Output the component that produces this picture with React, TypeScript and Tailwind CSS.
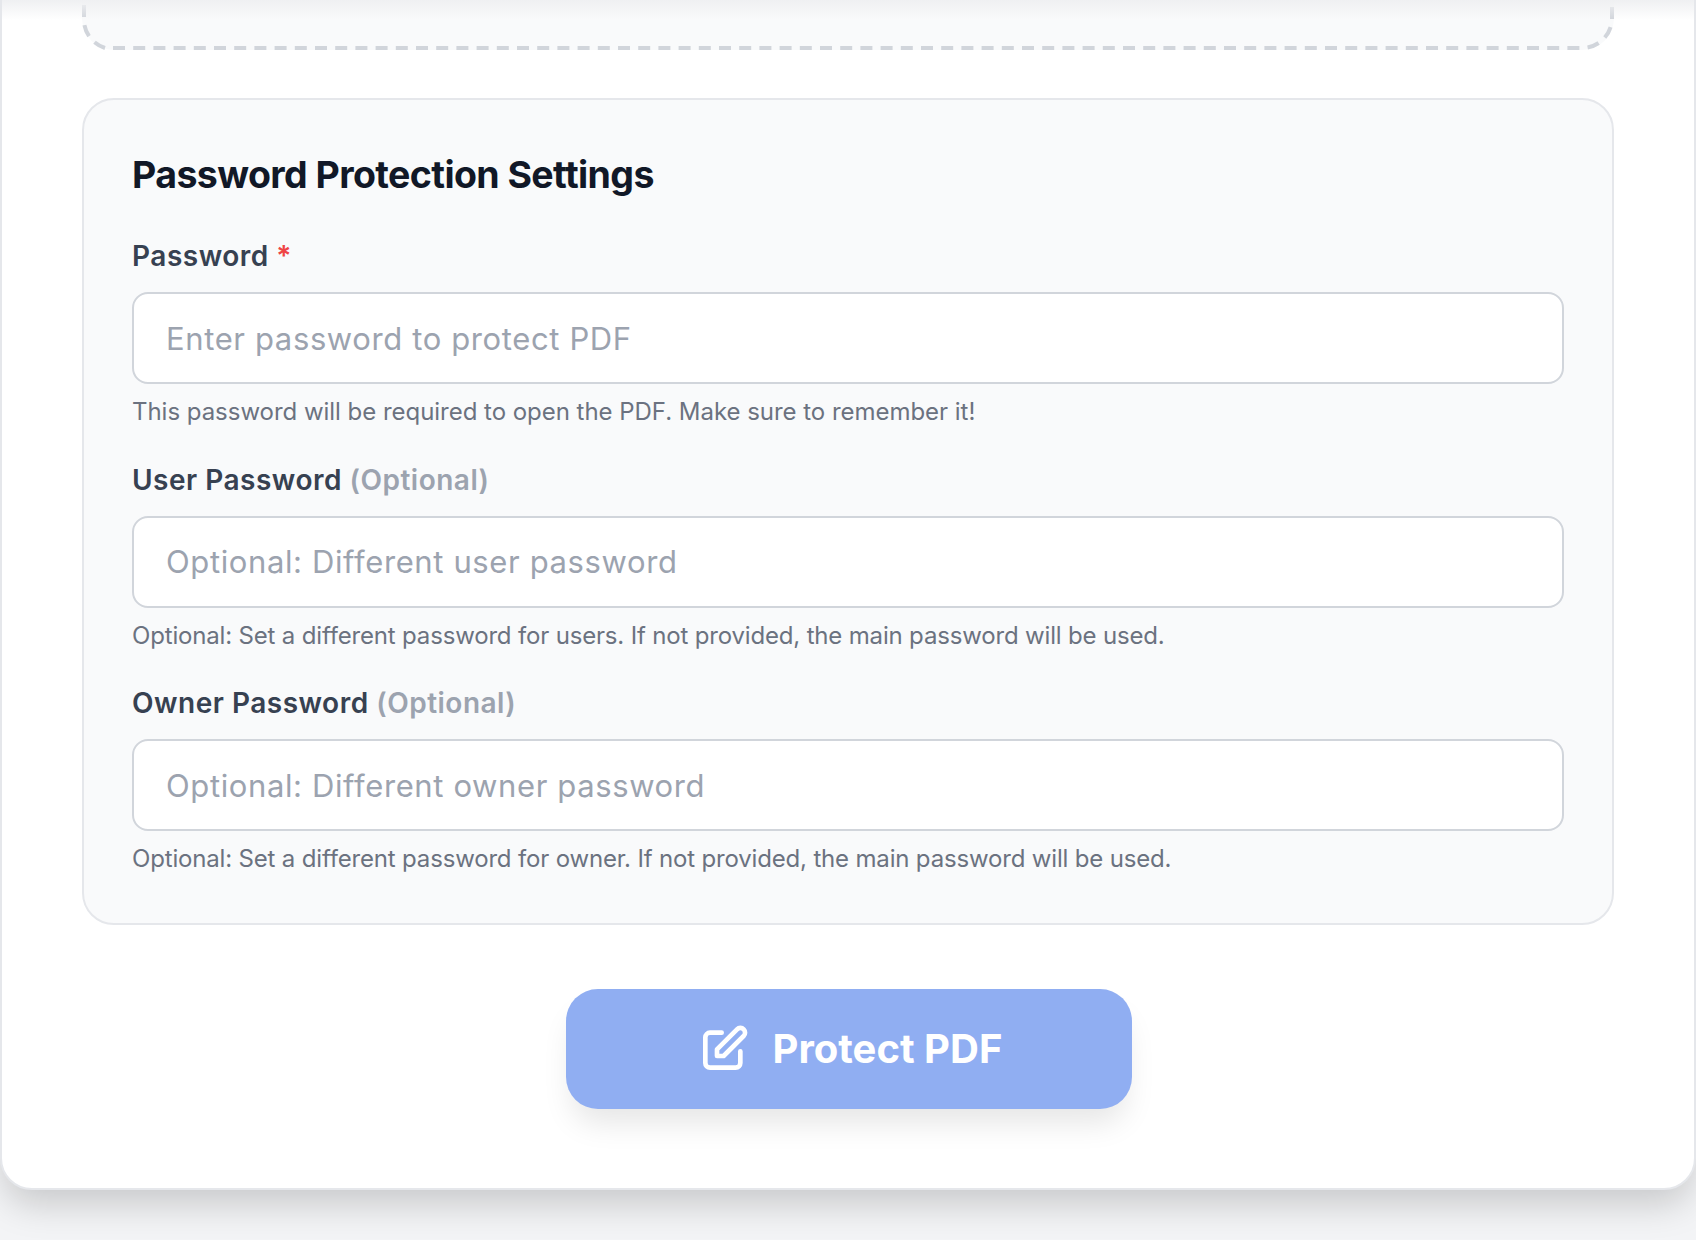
import React from "react"

type FieldProps = {
  label: string
  hint?: string
  required?: boolean
  placeholder: string
  help: string
  helpClass: string
}

const Field: React.FC<FieldProps> = ({ label, hint, required, placeholder, help, helpClass }) => {
  return (
    <div className="flex flex-col">
      <label className="text-[28px] leading-[40px] font-semibold tracking-[0.5px] text-[#374151] mb-[16px]">
        {label}
        {required && <span className="text-[#ef4444]"> *</span>}
        {hint && <span className="text-[#9ca3af]"> {hint}</span>}
      </label>
      <input
        type="password"
        placeholder={placeholder}
        className="w-full h-[92px] px-[32px] bg-white border-2 border-[#d1d5db] rounded-[16px] text-[31px] tracking-[0.62px] placeholder:text-[#9ca3af] outline-none"
      />
      <p className={"mt-[8px] text-[24px] leading-[40px] text-[#6b7280] " + helpClass}>{help}</p>
    </div>
  )
}

export default function App() {
  return (
    <div className="h-[1240px] overflow-hidden bg-[#f3f4f6] font-['Inter',sans-serif]">
      <div className="relative -mt-[40px] bg-white border-2 border-[#e5e7eb] rounded-[32px] shadow-[0_18px_36px_-4px_rgba(0,0,0,0.18)] h-[1230px] px-[80px]">
        {/* drop zone, cut by the page top */}
        <div className="relative h-[88px] bg-[#f9fafb] rounded-[32px]">
          <svg className="absolute inset-0 w-[1532px] h-[88px]" fill="none" stroke="#d1d5db" strokeWidth={4}>
            <path strokeDasharray="12 8.2" d="M31 86H1500a30 30 0 0 0 30-30V0" />
            <path strokeDasharray="12 8.2" d="M23 86a30 30 0 0 1-21-26V0" />
          </svg>
        </div>

        <div className="absolute left-0 right-0 top-[38px] h-[20px] bg-gradient-to-b from-[#eff0f2] to-transparent" />

        {/* settings panel */}
        <div className="mt-[48px] bg-[#f9fafb] border-2 border-[#e5e7eb] rounded-[32px] px-[48px] pt-[51px] h-[827px]">
          <h3 className="text-[37.5px] leading-[48px] font-bold tracking-[-0.6px] text-[#111827] mb-[37px]">
            Password Protection Settings
          </h3>
          <div className="flex flex-col gap-[27.5px]">
            <Field
              label="Password"
              required
              placeholder="Enter password to protect PDF"
              help="This password will be required to open the PDF. Make sure to remember it!"
              helpClass="tracking-[-0.03px]"
            />
            <Field
              label="User Password"
              hint="(Optional)"
              placeholder="Optional: Different user password"
              help="Optional: Set a different password for users. If not provided, the main password will be used."
              helpClass="tracking-[-0.17px]"
            />
            <Field
              label="Owner Password"
              hint="(Optional)"
              placeholder="Optional: Different owner password"
              help="Optional: Set a different password for owner. If not provided, the main password will be used."
              helpClass="tracking-[-0.17px]"
            />
          </div>
        </div>

        {/* submit */}
        <div className="mt-[64px] flex justify-center">
          <button className="ml-[2px] w-[566px] h-[120px] rounded-[32px] bg-[#90aef2] text-white text-[40px] font-bold flex items-center justify-center gap-[21px] shadow-[0_20px_30px_-6px_rgba(0,0,0,0.1)]">
            <svg className="w-[56px] h-[56px]" viewBox="0 0 24 24" fill="none" stroke="currentColor" strokeWidth={2} strokeLinecap="round" strokeLinejoin="round">
              <path d="M11 5H6a2 2 0 00-2 2v11a2 2 0 002 2h11a2 2 0 002-2v-5m-1.414-9.414a2 2 0 112.828 2.828L11.828 15H9v-2.828l8.586-8.586z" />
            </svg>
            Protect PDF
          </button>
        </div>
      </div>
    </div>
  )
}
